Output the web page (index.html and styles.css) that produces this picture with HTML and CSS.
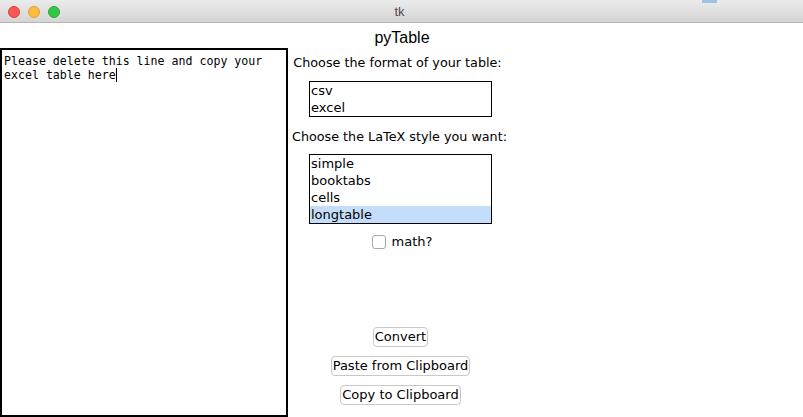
FILE: index.html
```html
<!DOCTYPE html>
<html>
<head>
<meta charset="utf-8">
<link rel="stylesheet" href="styles.css">
</head>
<body>
<div class="window">
  <div class="titlebar">
    <div class="lights">
      <span class="light red"></span>
      <span class="light yellow"></span>
      <span class="light green"></span>
    </div>
    <div class="wintitle">tk</div>
    <div class="peek"></div>
  </div>
  <div class="app-title">pyTable</div>
  <div class="main">
    <div class="editor">Please delete this line and copy your excel table here<span class="caret"></span></div>
    <div class="side">
      <div class="label first">Choose the format of your table:</div>
      <div class="listbox lb1">
        <div class="item">csv</div>
        <div class="item">excel</div>
      </div>
      <div class="label second">Choose the LaTeX style you want:</div>
      <div class="listbox lb2">
        <div class="item">simple</div>
        <div class="item">booktabs</div>
        <div class="item">cells</div>
        <div class="item selected">longtable</div>
      </div>
      <label class="check"><span class="box"></span><span>math?</span></label>
      <div class="buttons">
        <button class="btn">Convert</button>
        <button class="btn">Paste from Clipboard</button>
        <button class="btn">Copy to Clipboard</button>
      </div>
    </div>
  </div>
</div>
</body>
</html>
```

FILE: styles.css
```css
* { box-sizing: border-box; }
html, body { margin: 0; padding: 0; }
body {
  width: 803px;
  height: 417px;
  overflow: hidden;
  background: #ffffff;
  font-family: "DejaVu Sans", "Liberation Sans", sans-serif;
  color: #000;
}
.window { display: flex; flex-direction: column; height: 417px; }
.titlebar {
  position: relative;
  height: 23px;
  flex: none;
  background: linear-gradient(#ebebeb, #d5d5d5);
  border-bottom: 1px solid #b4b4b4;
  display: flex;
  align-items: center;
  justify-content: center;
}
.lights {
  position: absolute;
  left: 8px;
  top: 6px;
  display: flex;
  gap: 8px;
}
.light {
  width: 12px;
  height: 12px;
  border-radius: 50%;
  display: block;
}
.red { background: #fc5753; border: 1px solid #df3d3a; }
.yellow { background: #fdbc40; border: 1px solid #de9f34; }
.green { background: #33c748; border: 1px solid #27aa35; }
.wintitle {
  font-size: 13px;
  color: #4d4d4d;
  font-family: "Liberation Sans", Arial, sans-serif;
  margin-left: -4px;
}
.peek {
  position: absolute;
  left: 702px;
  top: 0;
  width: 15px;
  height: 3px;
  background: #9cc3e6;
}
.app-title {
  text-align: center;
  font-family: "Liberation Sans", Arial, sans-serif;
  font-size: 16px;
  height: 25px;
  line-height: 26px;
  padding-top: 2px;
  margin-left: 1px;
}
.main {
  display: flex;
  flex: 1;
  min-height: 0;
}
.editor {
  width: 288px;
  height: 369px;
  border: 2px solid #000;
  font-family: "DejaVu Sans Mono", monospace;
  font-size: 11.6px;
  line-height: 14px;
  padding: 4px 2px;
  flex: none;
}
.caret {
  display: inline-block;
  width: 1px;
  height: 14px;
  background: #000;
  vertical-align: -3px;
}
.side {
  width: 226px;
  display: flex;
  flex-direction: column;
  align-items: center;
  font-size: 13px;
}
.label { line-height: 16px; font-size: 12.75px; }
.first { margin-top: 7px; margin-right: 7px; }
.second { margin-top: 12px; margin-right: 3px; }
.listbox {
  width: 183px;
  border: 1px solid #000;
  margin-right: 1px;
}
.lb1 { margin-top: 10px; }
.lb2 { margin-top: 9px; }
.item {
  height: 17px;
  line-height: 17px;
  padding-left: 1px;
  font-size: 13px;
}
.selected { background: #c3ddfa; }
.check {
  display: flex;
  align-items: center;
  gap: 6px;
  margin-top: 10px;
  margin-left: 2px;
  font-size: 13px;
}
.box {
  width: 14px;
  height: 14px;
  border: 1px solid #a8a8a8;
  border-radius: 3px;
  background: #fff;
  display: block;
}
.buttons {
  margin-top: 78px;
  display: flex;
  flex-direction: column;
  align-items: center;
  gap: 9px;
  margin-right: 1px;
}
.btn {
  font-family: "DejaVu Sans", "Liberation Sans", sans-serif;
  font-size: 13px;
  height: 20px;
  padding: 0 1px;
  background: #fff;
  border: 1px solid #c8c8c8;
  border-radius: 4px;
  color: #000;
  line-height: 18px;
}
```
